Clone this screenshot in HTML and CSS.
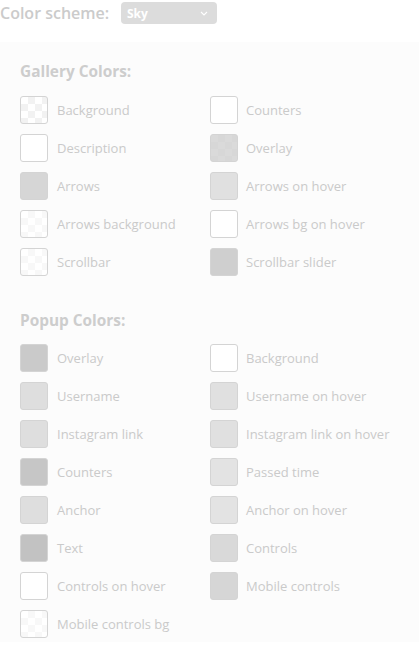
FILE: index.html
```html
<!DOCTYPE html>
<html>
<head>
<meta charset="utf-8">
<link rel="stylesheet" href="styles.css">
</head>
<body>
<div class="scheme">
  <span class="scheme-label">Color scheme:</span>
  <div class="select"><span>Sky</span>
    <svg class="chev" width="8" height="5" viewBox="0 0 8 5"><path d="M1 1l3 3 3-3" fill="none" stroke="#fff" stroke-width="1.1"/></svg>
  </div>
</div>
<div class="panel">
  <h3 class="heading">Gallery Colors:</h3>
  <div class="grid">
    <div class="item"><span class="sw checker"></span><span class="lbl">Background</span></div>
    <div class="item"><span class="sw c-white"></span><span class="lbl">Counters</span></div>
    <div class="item"><span class="sw c-white"></span><span class="lbl">Description</span></div>
    <div class="item"><span class="sw c-overlay"></span><span class="lbl">Overlay</span></div>
    <div class="item"><span class="sw c-d4"></span><span class="lbl">Arrows</span></div>
    <div class="item"><span class="sw c-e0"></span><span class="lbl">Arrows on hover</span></div>
    <div class="item"><span class="sw checker-faint"></span><span class="lbl">Arrows background</span></div>
    <div class="item"><span class="sw c-white"></span><span class="lbl">Arrows bg on hover</span></div>
    <div class="item"><span class="sw checker-faint"></span><span class="lbl">Scrollbar</span></div>
    <div class="item"><span class="sw c-cf"></span><span class="lbl">Scrollbar slider</span></div>
  </div>
  <h3 class="heading second">Popup Colors:</h3>
  <div class="grid">
    <div class="item"><span class="sw c-c8"></span><span class="lbl">Overlay</span></div>
    <div class="item"><span class="sw c-white"></span><span class="lbl">Background</span></div>
    <div class="item"><span class="sw c-de"></span><span class="lbl">Username</span></div>
    <div class="item"><span class="sw c-e0"></span><span class="lbl">Username on hover</span></div>
    <div class="item"><span class="sw c-de"></span><span class="lbl">Instagram link</span></div>
    <div class="item"><span class="sw c-e0"></span><span class="lbl">Instagram link on hover</span></div>
    <div class="item"><span class="sw c-c4"></span><span class="lbl">Counters</span></div>
    <div class="item"><span class="sw c-e3"></span><span class="lbl">Passed time</span></div>
    <div class="item"><span class="sw c-de"></span><span class="lbl">Anchor</span></div>
    <div class="item"><span class="sw c-e3"></span><span class="lbl">Anchor on hover</span></div>
    <div class="item"><span class="sw c-c0"></span><span class="lbl">Text</span></div>
    <div class="item"><span class="sw c-d8"></span><span class="lbl">Controls</span></div>
    <div class="item"><span class="sw c-white"></span><span class="lbl">Controls on hover</span></div>
    <div class="item"><span class="sw c-d4"></span><span class="lbl">Mobile controls</span></div>
    <div class="item"><span class="sw checker-faint"></span><span class="lbl">Mobile controls bg</span></div>
  </div>
</div>
</body>
</html>
```
FILE: styles.css
```css
html, body {
  margin: 0;
  padding: 0;
  background: #ffffff;
  font-family: "Open Sans", "Liberation Sans", sans-serif;
  color: #c9c9c9;
}
.scheme {
  display: flex;
  align-items: center;
  height: 26px;
}
.scheme-label {
  font-size: 16px;
  font-weight: 600;
  color: #cbcbcb;
  width: 121px;
  line-height: 26px;
}
.select {
  width: 96px;
  height: 22px;
  box-sizing: border-box;
  background: #dcdcdc;
  border-radius: 4px;
  display: flex;
  align-items: center;
  justify-content: space-between;
  padding: 0 9px 0 6px;
  color: #ffffff;
  font-size: 12px;
  font-weight: 700;
}
.chev { display: block; }
.panel {
  margin-top: 16px;
  background: #fcfcfc;
  padding: 20px 20px 4px 20px;
}
.heading {
  margin: 0;
  font-size: 15.4px;
  line-height: 20px;
  font-weight: 700;
  color: #cdcdcd;
}
.heading.second {
  margin-top: 35px;
}
.grid {
  display: grid;
  grid-template-columns: 190px 1fr;
  row-gap: 10px;
  margin-top: 14px;
}
.second + .grid { margin-top: 13px; }
.item {
  display: flex;
  align-items: center;
  gap: 9px;
  height: 28px;
}
.item:nth-child(even) { gap: 8px; }
.sw {
  width: 28px;
  height: 28px;
  box-sizing: border-box;
  border: 1px solid #d4d4d4;
  border-radius: 3px;
  flex: none;
}
.lbl {
  font-size: 13px;
  color: #cacaca;
  white-space: nowrap;
}
.c-white { background: #ffffff; }
.c-d4 { background: #d6d6d6; }
.c-e0 { background: #e0e0e0; }
.c-cf { background: #cfcfcf; }
.c-c8 { background: #cacaca; }
.c-de { background: #dedede; }
.c-c4 { background: #c6c6c6; }
.c-e3 { background: #e3e3e3; }
.c-c0 { background: #c2c2c2; }
.c-d8 { background: #d9d9d9; }
.c-overlay {
  background-color: #dadada;
  background-image:
    linear-gradient(45deg, #d7d7d7 25%, transparent 25%, transparent 75%, #d7d7d7 75%),
    linear-gradient(45deg, #d7d7d7 25%, transparent 25%, transparent 75%, #d7d7d7 75%);
  background-size: 14px 14px;
  background-position: 0 0, 7px 7px;
}
.checker {
  background-color: #ffffff;
  background-image:
    linear-gradient(45deg, #f2f2f2 25%, transparent 25%, transparent 75%, #f2f2f2 75%),
    linear-gradient(45deg, #f2f2f2 25%, transparent 25%, transparent 75%, #f2f2f2 75%);
  background-size: 14px 14px;
  background-position: 0 0, 7px 7px;
}
.checker-faint {
  background-color: #ffffff;
  background-image:
    linear-gradient(45deg, #f8f8f8 25%, transparent 25%, transparent 75%, #f8f8f8 75%),
    linear-gradient(45deg, #f8f8f8 25%, transparent 25%, transparent 75%, #f8f8f8 75%);
  background-size: 14px 14px;
  background-position: 0 0, 7px 7px;
}
```
